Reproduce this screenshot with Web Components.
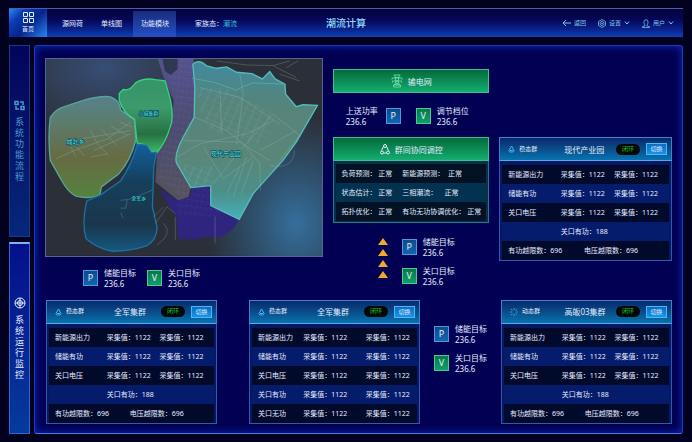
<!DOCTYPE html>
<html lang="zh-CN">
<head>
<meta charset="utf-8">
<meta name="viewport" content="width=device-width, initial-scale=1">
<title>潮流计算</title>
<style>
    * { box-sizing: border-box; }
    body {
        margin: 0;
        min-height: 100vh;
        padding: 8px 9px;
        display: flex;
        flex-direction: column;
        gap: 8px;
        background: #020220;
        color: #e4ecff;
        font-family: "Noto Sans", "Noto Sans CJK SC", sans-serif;
        font-size: 7px;
        line-height: 11px;
    }
    .page {
        flex: 1;
        display: flex;
        gap: 4px;
    }
    .page main { flex: 1; display: flex; min-width: 0; }
</style>
</head>
<body>
<top-bar heading="潮流计算"></top-bar>
<div class="page">
    <side-tabs></side-tabs>
    <main><dashboard-panel></dashboard-panel></main>
</div>

<script>
const baseStyle = `
    * { box-sizing: border-box; }
    button {
        margin: 0;
        padding: 0;
        border: none;
        background: none;
        color: inherit;
        font: inherit;
        cursor: pointer;
    }
    svg { display: block; fill: none; stroke: currentColor; }
`;

// Data cluster
const steadyRows = [
    ['新能源出力', '采集值：1122', '采集值：1122'],
    ['储能有功', '采集值：1122', '采集值：1122'],
    ['关口电压', '采集值：1122', '采集值：1122'],
    ['', '关口有功：188'],
    ['有功越限数：696', '电压越限数：696'],
];

const fullRows = [
    ['新能源出力', '采集值：1122', '采集值：1122'],
    ['储能有功', '采集值：1122', '采集值：1122'],
    ['关口电压', '采集值：1122', '采集值：1122'],
    ['关口有功', '采集值：1122', '采集值：1122'],
    ['关口无功', '采集值：1122', '采集值：1122'],
];

const clusters = {
    park: { type: '稳态群', icon: 'drop', title: '现代产业园', rows: steadyRows },
    armyA: { type: '稳态群', icon: 'drop', title: '全军集群', rows: steadyRows },
    armyB: { type: '稳态群', icon: 'drop', title: '全军集群', rows: fullRows },
    gaoban: { type: '动态群', icon: 'spark', title: '高皈03集群', rows: steadyRows },
};

const clusterIcons = {
    drop: '<svg width="7" height="8" viewBox="0 0 14 16" stroke-width="2"><path d="M7 2 L12 11 Q12 14 9 14 H5 Q2 14 2 11 Z"/><path d="M4 11 H10"/></svg>',
    spark: '<svg width="8" height="8" viewBox="0 0 16 16" stroke-width="1.500"><path d="M8 0V4M8 12V16M0 8H4M12 8H16M2 2L5 5M11 11L14 14M2 14L5 11M11 5L14 2"/></svg>',
};

class TopBar extends HTMLElement {
    constructor() {
        super();
        this.attachShadow({ mode: 'open' });
    }

    connectedCallback() {
        this.shadowRoot.innerHTML = `
            <style>
                ${baseStyle}
                :host {
                    display: grid;
                    grid-template-columns: 1fr auto 1fr;
                    height: 29px;
                    border-top: 1px solid #4a5fa8;
                    background: linear-gradient(#04043c 0%, #05075a 40%, #0a2590 75%, #1240b4 100%);
                }
                nav, .tools { display: flex; align-items: stretch; white-space: nowrap; }
                .home {
                    width: 38px;
                    margin-right: 6px;
                    display: flex;
                    flex-direction: column;
                    align-items: center;
                    justify-content: center;
                    gap: 1px;
                    font-size: 6px;
                    background: linear-gradient(135deg, #2f8af0 0%, #0b3cb4 25%, #06248c 55%, #2a86f2 100%);
                }
                .item { width: 39px; padding: 0 8px; }
                .item.active {
                    width: 43px;
                    margin: 2px 0 0 2px;
                    padding-bottom: 2px;
                    background: linear-gradient(#1a2c7c, #2450c8);
                }
                .state { margin: auto 0 auto 19px; }
                .state a { color: #35bfe0; text-decoration: none; }
                h1 {
                    margin: auto;
                    font-size: 10px;
                    font-weight: 500;
                    line-height: 14px;
                    color: #8fdcf8;
                }
                .tools {
                    justify-content: flex-end;
                    gap: 12px;
                    padding-right: 9px;
                    font-size: 6px;
                    color: #7fc6ea;
                }
                .tools button { display: flex; align-items: center; gap: 3px; }
            </style>
            <nav>
                <button class="home">
                    <svg width="11" height="11" viewBox="0 0 11 11"><path d="M.5 .5h4v4h-4zM6.500 .5h4v4h-4zM.5 6.500h4v4h-4zM6.500 6.500h4v4h-4z"/></svg>
                    首页
                </button>
                <button class="item">源网荷</button>
                <button class="item">单线图</button>
                <button class="item active">功能模块</button>
                <span class="state">家族态：<a href="#">潮流</a></span>
            </nav>
            <h1>${this.getAttribute('heading')}</h1>
            <div class="tools">
                <button>
                    <svg width="9" height="8" viewBox="0 0 9 8"><path d="M9 4H1M4 1L1 4L4 7"/></svg>
                    返回
                </button>
                <button aria-haspopup="menu">
                    <svg width="8" height="9" viewBox="0 0 16 18" stroke-width="1.500"><path d="M8 1L15 5V13L8 17L1 13V5Z"/><circle cx="8" cy="9" r="4"/><circle cx="8" cy="9" r="1"/></svg>
                    设置
                    <svg width="6" height="4" viewBox="0 0 6 4"><path d="M1 .5L3 3L5 .5"/></svg>
                </button>
                <button aria-haspopup="menu">
                    <svg width="8" height="9" viewBox="0 0 16 18" stroke-width="1.500"><path d="M4 6a4 4.500 0 0 1 8 0c0 3-1 5-2 6v2l5 1v2H1v-2l5-1v-2C5 11 4 9 4 6Z"/></svg>
                    用户
                    <svg width="6" height="4" viewBox="0 0 6 4"><path d="M1 .5L3 3L5 .5"/></svg>
                </button>
            </div>
        `;
    }
}

class SideTabs extends HTMLElement {
    constructor() {
        super();
        this.attachShadow({ mode: 'open' });
    }

    connectedCallback() {
        this.shadowRoot.innerHTML = `
            <style>
                ${baseStyle}
                :host { display: flex; flex-direction: column; gap: 5px; width: 21px; }
                button {
                    flex: 1;
                    display: flex;
                    flex-direction: column;
                    align-items: center;
                    justify-content: center;
                    gap: 5px;
                    border: 1px solid #183c84;
                    background: linear-gradient(#04045c, #06287a);
                    color: #4a9ccc;
                    font-size: 9px;
                }
                button.active {
                    border-color: #3268c8;
                    border-top: 2px solid #7fb2f4;
                    background: linear-gradient(#05108a, #053a9c);
                    color: #e4ecff;
                }
                /* one glyph per line */
                span { width: 9px; word-break: break-all; }
            </style>
            <button>
                <svg width="11" height="11" viewBox="0 0 11 11" stroke-width="1.500"><path d="M1 1.500h3v3H1zM7 6.500h3v3H7zM6 2h3v3M2 6v3h3"/></svg>
                <span>系统功能流程</span>
            </button>
            <button class="active">
                <svg width="12" height="12" viewBox="0 0 12 12"><circle cx="6" cy="6" r="5"/><circle cx="6" cy="6" r="2.500"/><path d="M6 1V11M1 6H11"/></svg>
                <span>系统运行监控</span>
            </button>
        `;
    }
}

// P / V value with label
class MetricItem extends HTMLElement {
    constructor() {
        super();
        this.attachShadow({ mode: 'open' });
    }

    connectedCallback() {
        const kind = this.getAttribute('kind');
        this.shadowRoot.innerHTML = `
            <style>
                ${baseStyle}
                :host { display: flex; align-items: center; gap: 6px; font-size: 8px; white-space: nowrap; }
                :host([reverse]) { flex-direction: row-reverse; gap: 8px; }
                b {
                    width: 15px;
                    height: 16px;
                    border: 1px solid #4a9ae0;
                    background: linear-gradient(#0c4a8c, #1266b0);
                    font-size: 9px;
                    font-weight: 400;
                    line-height: 14px;
                    text-align: center;
                }
                b.V { border-color: #4cc89c; background: linear-gradient(#087848, #10a068); }
                span { display: block; }
            </style>
            <b class="${kind}">${kind}</b>
            <div><span><slot></slot></span><span>${this.getAttribute('value')}</span></div>
        `;
    }
}

class RegionMap extends HTMLElement {
    constructor() {
        super();
        this.attachShadow({ mode: 'open' });
    }

    connectedCallback() {
        this.shadowRoot.innerHTML = `
            <style>
                ${baseStyle}
                :host { display: block; border: 1px solid #53668c; }
                svg { width: 100%; height: auto; stroke: none; }
                .road { fill: none; stroke: #a4c4b8; stroke-width: 2; opacity: .4; }
                text {
                    fill: #5ff0ee;
                    stroke: #044050;
                    stroke-width: 3;
                    paint-order: stroke;
                    text-anchor: middle;
                }
            </style>
            <svg viewBox="15 24 834 594" role="img" aria-label="区域地图">
                <defs>
                    <linearGradient id="west" x2="0" y2="1"><stop offset="0" stop-color="#56808c"/><stop offset=".25" stop-color="#5c7c6e"/><stop offset=".6" stop-color="#676b43"/><stop offset="1" stop-color="#55823f"/></linearGradient>
                    <linearGradient id="north" x2="0" y2="1"><stop offset="0" stop-color="#359468"/><stop offset=".4" stop-color="#3c9a6c"/><stop offset=".75" stop-color="#287043"/><stop offset="1" stop-color="#3db865"/></linearGradient>
                    <linearGradient id="south" x2="0" y2="1"><stop offset="0" stop-color="#125e9c"/><stop offset=".35" stop-color="#163f5c"/><stop offset=".75" stop-color="#1a364c"/><stop offset="1" stop-color="#155880"/></linearGradient>
                    <linearGradient id="east" x2="0" y2="1"><stop offset="0" stop-color="#3f8aa0"/><stop offset=".25" stop-color="#55847c"/><stop offset=".6" stop-color="#5a8679"/><stop offset=".82" stop-color="#4c8f88"/><stop offset="1" stop-color="#45b0bc"/></linearGradient>
                    <linearGradient id="belt" x2="0" y2="1"><stop offset="0" stop-color="#54508e"/><stop offset=".5" stop-color="#4a4b70"/><stop offset="1" stop-color="#55525e"/></linearGradient>
                    <radialGradient id="glowA"><stop offset="0" stop-color="#356f9c"/><stop offset="1" stop-color="#2f6a96" stop-opacity="0"/></radialGradient>
                    <radialGradient id="glowB"><stop offset="0" stop-color="#374d74"/><stop offset="1" stop-color="#384f74" stop-opacity="0"/></radialGradient>
                    <pattern id="blocks" width="15" height="19" patternUnits="userSpaceOnUse" patternTransform="rotate(8)"><path d="M0 0H15M0 0V19M7 0V10" fill="none" stroke="#9a94c4" stroke-width="1"/></pattern>
                    <pattern id="streets" width="24" height="19" patternUnits="userSpaceOnUse" patternTransform="rotate(24)"><path d="M0 0H24M12 0V19" fill="none" stroke="#a6c8b8" stroke-width="1"/></pattern>
                </defs>
                <rect x="15" y="24" width="834" height="594" fill="#2b2f38"/>
                <ellipse cx="190" cy="50" rx="330" ry="210" fill="url(#glowB)"/>
                <ellipse cx="770" cy="520" rx="270" ry="330" fill="url(#glowA)"/>

                <path d="M352 24H460L470 190L425 270L410 330L452 410L445 440L415 452L345 395L350 300L390 240L400 150L372 85Z" fill="url(#belt)"/>
                <path d="M372 24H458L470 190L425 270L410 330L452 410L430 445L350 380L360 310L395 250L405 150L385 85Z" fill="url(#blocks)" opacity=".35"/>
                <path d="M366 24H412V55L390 72L374 60Z" fill="#2e3850"/>
                <path d="M355 415L410 452L450 438L455 412L512 404L514 466L596 508L582 535L545 562H490L470 568H415L408 500Z" fill="#30257e"/>
                <path d="M410 452L455 412L512 404L514 466L545 480L540 500H410Z" fill="url(#blocks)" opacity=".25"/>

                <path d="M28 200Q45 175 70 168L130 148Q180 134 210 138Q238 150 240 178L282 208L286 270Q270 330 235 370L182 410L178 432Q150 448 105 438Q80 425 62 390L28 330Q20 260 28 200Z" fill="url(#west)" stroke="#58a49a" stroke-width="4"/>
                <path d="M236 128L248 116Q268 122 285 96Q310 80 345 86L374 90L386 130Q400 180 394 215Q380 270 350 306L330 302L318 284L290 278L282 205Q250 190 236 150Z" fill="url(#north)" stroke="#3ad082" stroke-width="4"/>
                <path d="M290 282L318 284L332 306H348L340 350L336 470L350 530Q350 570 318 588Q270 604 215 604Q170 595 136 566Q122 520 138 452L180 434L240 392Q275 340 290 282Z" fill="url(#south)" stroke="#1c70a4" stroke-width="4"/>
                <path d="M458 40Q475 22 500 45L530 52L560 48L590 64L636 68L668 84L690 62L706 84L736 100L738 130L770 168L790 162L834 164L770 275L730 330L640 430L598 508L512 466V406L452 412L408 336Q402 310 430 258L462 200L464 110Z" fill="url(#east)" stroke="#56bcbc" stroke-width="4"/>
                <path d="M456 82L520 94L590 118L612 106L640 96L736 100" fill="none" stroke="#4fa8a4" stroke-width="3"/>

                <path d="M470 110H560L700 190L690 250L640 290L570 240L520 250L480 180Z" fill="url(#streets)" opacity=".45"/>
                <path d="M415 330L460 350L520 345V400L455 408Z" fill="url(#streets)" opacity=".6"/>
                <g class="road">
                    <path d="M464 200L560 240L610 280L660 340L662 420M410 320L480 280L620 250L700 210M520 400L600 300L700 190M540 120L545 250M600 70L610 130L590 280M700 190L780 255L720 330M660 300L770 240M480 110L600 140L720 220M490 290L550 385L640 320M620 320L580 440M600 350L560 430M640 330L605 430M430 270L600 275L690 330"/>
                    <path d="M45 325L100 300L200 265L270 215M90 290L105 320M110 290L130 318M150 320L200 310M150 240L170 280L205 315M160 300L270 250M180 235L230 285M210 225L260 255M240 215L275 230M120 265L270 240"/>
                    <path d="M335 420L265 448L240 450M260 448L256 474L240 474M240 488L248 505M345 520L380 470L405 490M350 585Q400 550 370 520M370 470L340 500M405 500V570M525 500V580"/>
                    <path d="M530 30L620 42L700 44L770 80M700 44L750 30M720 70L780 90M740 50L775 30M690 345Q760 360 765 300"/>
                </g>
                <g font-size="18">
                    <text x="104" y="279">城北乡</text>
                    <text x="324" y="194" font-size="15">小城集群</text>
                    <text x="558" y="318">现代产业园</text>
                    <text x="295" y="449" font-size="15">全军乡</text>
                </g>
            </svg>
        `;
    }
}

class GreenBar extends HTMLElement {
    constructor() {
        super();
        this.attachShadow({ mode: 'open' });
    }

    connectedCallback() {
        this.shadowRoot.innerHTML = `
            <style>
                ${baseStyle}
                :host {
                    display: flex;
                    align-items: center;
                    justify-content: center;
                    gap: 5px;
                    height: 24px;
                    border: 1px solid #3cc090;
                    background: linear-gradient(#066a3c, #0f9c62 75%, #14b070);
                    font-size: 8px;
                }
            </style>
            <slot name="icon"></slot><slot></slot>
        `;
    }
}

class RegulationCard extends HTMLElement {
    constructor() {
        super();
        this.attachShadow({ mode: 'open' });
    }

    connectedCallback() {
        this.shadowRoot.innerHTML = `
            <style>
                ${baseStyle}
                :host { display: block; }
                .icon { fill: none; }
                .body { padding: 3px 2px 1px; border: 1px solid #237a86; border-top: none; background: #04304c; }
                table { width: 100%; border-collapse: collapse; table-layout: fixed; }
                tr { height: 19px; background: #033250; }
                tr:nth-child(odd) { background: #021224; }
                td { padding: 0; white-space: pre; }
                td:first-child { width: 44%; padding-left: 5px; }
            </style>
            <green-bar>
                <svg slot="icon" class="icon" width="10" height="11" viewBox="0 0 20 22" stroke="#8af0c0" stroke-width="2"><path d="M7 5L3 13M13 5L17 13M7 18H13"/><circle cx="10" cy="4" r="3"/><circle cx="4" cy="17" r="3"/><circle cx="16" cy="17" r="3"/></svg>
                群间协同调控
            </green-bar>
            <div class="body">
                <table>
                    <tr><td>负荷预测： 正常</td><td>新能源预测：  正常</td></tr>
                    <tr><td>状态估计： 正常</td><td>三相潮流：    正常</td></tr>
                    <tr><td>拓扑优化： 正常</td><td>有功无功协调优化： 正常</td></tr>
                </table>
            </div>
        `;
    }
}

class ClusterCard extends HTMLElement {
    constructor() {
        super();
        this.attachShadow({ mode: 'open' });
    }

    connectedCallback() {
        const data = clusters[this.getAttribute('cluster')];
        this.render(data);
    }

    renderRow(row) {
        // four table columns: a 3-cell row merges the middle two
        if (row.length === 3) {
            return `<tr><td>${row[0]}</td><td colspan="2">${row[1]}</td><td>${row[2]}</td></tr>`;
        }
        if (row[0] === '') {
            return `<tr><td></td><td colspan="3">${row[1]}</td></tr>`;
        }
        return `<tr><td colspan="2">${row[0]}</td><td colspan="2">${row[1]}</td></tr>`;
    }

    render(data) {
        this.shadowRoot.innerHTML = `
            <style>
                ${baseStyle}
                :host { display: block; --first: 35%; --second: 14%; --third: 18%; }
                :host([wide]) { --first: 31%; --second: 19%; --third: 19%; }
                header {
                    height: 24px;
                    display: flex;
                    align-items: center;
                    padding: 0 4px 0 8px;
                    border: 1px solid #3c84c8;
                    border-bottom-color: #58a8e4;
                    background: linear-gradient(#08286c, #0a5490 60%, #0674b0);
                    white-space: nowrap;
                }
                .type { display: flex; align-items: center; gap: 4px; width: 44px; font-size: 6px; }
                .type svg { color: #48b4f4; }
                h2 { flex: 1; margin: 0; font-size: 8px; font-weight: 400; text-align: center; }
                .pill {
                    width: 24px;
                    margin-right: 6px;
                    border-radius: 6px;
                    background: #020806;
                    color: #20c030;
                    font-size: 6px;
                    text-align: center;
                }
                button {
                    width: 21px;
                    height: 12px;
                    border: 1px solid #48b8f8;
                    background: linear-gradient(#0c6cc0, #1696e4);
                    font-size: 6px;
                    line-height: 10px;
                }
                .body { padding: 4px 2px 0; border: 1px solid #3458ac; border-top: none; background: #061864; }
                table { width: 100%; border-collapse: collapse; table-layout: fixed; }
                tr { height: 19px; background: #051c6c; }
                tr:nth-child(odd) { background: #020a2c; }
                td { padding: 0; white-space: nowrap; }
                td:first-child { padding-left: 6px; }
                .c1 { width: var(--first); }
                .c2 { width: var(--second); }
                .c3 { width: var(--third); }
            </style>
            <header>
                <span class="type">${clusterIcons[data.icon]}${data.type}</span>
                <h2>${data.title}</h2>
                <span class="pill">闭环</span>
                <button>切换</button>
            </header>
            <div class="body">
                <table>
                    <colgroup><col class="c1"><col class="c2"><col class="c3"><col></colgroup>
                    <tbody>${data.rows.map((row) => this.renderRow(row)).join('')}</tbody>
                </table>
            </div>
        `;
    }
}

class DashboardPanel extends HTMLElement {
    constructor() {
        super();
        this.attachShadow({ mode: 'open' });
    }

    connectedCallback() {
        this.shadowRoot.innerHTML = `
            <style>
                ${baseStyle}
                :host {
                    flex: 1;
                    min-width: 0;
                    display: flex;
                    flex-direction: column;
                    gap: 11px;
                    padding: 12px 10px 8px;
                    border: 1px solid #1c3cb4;
                    border-bottom-color: #4878e0;
                    border-radius: 3px;
                    background: #020052;
                    box-shadow: inset 0 0 9px #0c2cc0;
                }
                .top { display: grid; grid-template-columns: 278fr 338fr; gap: 10px; }
                .metrics { display: flex; gap: 11px; padding: 10px 0 0 38px; }
                .right { display: flex; flex-direction: column; gap: 10px; padding-top: 11px; }
                .feeder, .control { width: 46%; }
                .pair { display: flex; justify-content: center; gap: 15px; margin-top: 12px; padding-right: 8px; }
                .lower { display: flex; justify-content: space-between; align-items: flex-start; }
                .lower cluster-card { width: 51%; }
                .flow { display: flex; justify-content: center; gap: 14px; margin-top: 13px; padding-left: 10px; }
                .stack { display: flex; flex-direction: column; gap: 7px; }
                .bottom { display: flex; gap: 14px; padding-left: 1px; }
                .bottom cluster-card { flex: 1; }
                .bottom cluster-card:first-child { margin-right: 18px; }
                .bottom .stack { padding-top: 23px; }
            </style>
            <div class="top">
                <div>
                    <region-map></region-map>
                    <div class="metrics">
                        <metric-item kind="P" value="236.6">储能目标</metric-item>
                        <metric-item kind="V" value="236.6">关口目标</metric-item>
                    </div>
                </div>
                <div class="right">
                    <div class="feeder">
                        <green-bar>
                            <svg slot="icon" width="12" height="14" viewBox="0 0 24 28" stroke="#7ae8b4" stroke-width="1.500" style="stroke: #7ae8b4"><path d="M5 2H19M8 2V7H16V2M2 8H22M2 8V11M22 8V11M8 8L10 14H14L16 8M3 14H21M3 14V17M21 14V17M10 14L7 22M14 14L17 22M9 17L16 22M15 17L8 22M5 22H19V26H5Z"/></svg>
                            输电网
                        </green-bar>
                        <div class="pair">
                            <metric-item kind="P" value="236.6" reverse>上送功率</metric-item>
                            <metric-item kind="V" value="236.6">调节档位</metric-item>
                        </div>
                    </div>
                    <div class="lower">
                        <div class="control">
                            <regulation-card></regulation-card>
                            <div class="flow">
                                <svg width="10" height="46" viewBox="0 0 10 46"><path fill="#f0a830" stroke="none" d="M5 2L10 9H0ZM5 13L10 20H0ZM5 24L10 31H0ZM5 35L10 42H0Z"/></svg>
                                <div class="stack">
                                    <metric-item kind="P" value="236.6">储能目标</metric-item>
                                    <metric-item kind="V" value="236.6">关口目标</metric-item>
                                </div>
                            </div>
                        </div>
                        <cluster-card cluster="park"></cluster-card>
                    </div>
                </div>
            </div>
            <div class="bottom">
                <cluster-card cluster="armyA"></cluster-card>
                <cluster-card cluster="armyB" wide></cluster-card>
                <div class="stack">
                    <metric-item kind="P" value="236.6">储能目标</metric-item>
                    <metric-item kind="V" value="236.6">关口目标</metric-item>
                </div>
                <cluster-card cluster="gaoban"></cluster-card>
            </div>
        `;
    }
}

customElements.define('top-bar', TopBar);
customElements.define('side-tabs', SideTabs);
customElements.define('metric-item', MetricItem);
customElements.define('region-map', RegionMap);
customElements.define('green-bar', GreenBar);
customElements.define('regulation-card', RegulationCard);
customElements.define('cluster-card', ClusterCard);
customElements.define('dashboard-panel', DashboardPanel);
</script>
</body>
</html>
